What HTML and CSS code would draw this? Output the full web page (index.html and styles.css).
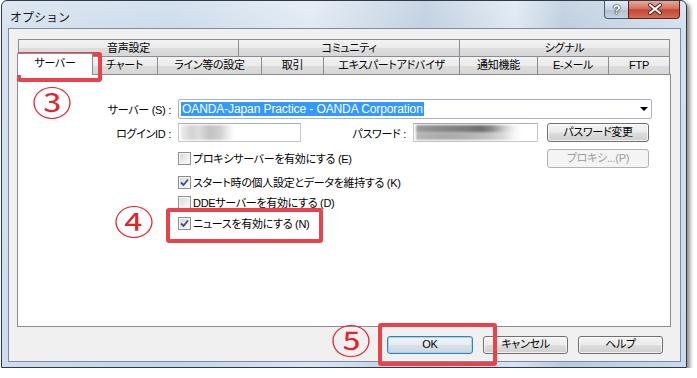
FILE: index.html
```html
<!DOCTYPE html>
<html lang="ja">
  <head>
    <meta charset="UTF-8" />
    <title>オプション</title>
    <link rel="stylesheet" href="styles.css">
  </head>
  <body>
    <div class="window">
      <div class="titlebar">
        <span class="title">オプション</span>
        <div class="caption">
          <span class="cap-help">?</span>
          <span class="cap-close">
            <svg width="52" height="18" viewBox="0 0 52 18">
              <path d="M21 5 L31 13 M31 5 L21 13" stroke="#5a1e16" stroke-width="4" stroke-linecap="round" />
              <path d="M21 5 L31 13 M31 5 L21 13" stroke="#ffffff" stroke-width="2.2" stroke-linecap="round" />
            </svg>
          </span>
        </div>
      </div>

      <div class="client">
        <div class="tab-row back">
          <div class="tab w221">音声設定</div>
          <div class="tab w222">コミュニティ</div>
          <div class="tab w211">シグナル</div>
        </div>
        <div class="tab-row front">
          <div class="tab selected">サーバー</div>
          <div class="tab w67">チャート</div>
          <div class="tab w105">ライン等の設定</div>
          <div class="tab w63">取引</div>
          <div class="tab w137">エキスパートアドバイザ</div>
          <div class="tab w79">通知機能</div>
          <div class="tab w72">E-メール</div>
          <div class="tab w62">FTP</div>
        </div>

        <div class="panel">
          <div class="row r1">
            <span class="lbl">サーバー (S) :</span>
            <div class="combo">
              <span class="sel-text">OANDA-Japan Practice - OANDA Corporation</span>
              <span class="arrow"></span>
            </div>
          </div>
          <div class="row r2">
            <span class="lbl">ログインID :</span>
            <div class="field login"><span class="blur-login"></span></div>
            <span class="lbl-pw">パスワード :</span>
            <div class="field pw"><span class="blur-pw"></span></div>
            <span class="btn side">パスワード変更</span>
          </div>
          <div class="row r3">
            <span class="lbl"></span>
            <label class="check wide"><span class="box"></span>プロキシサーバーを有効にする (E)</label>
            <span class="btn side disabled">プロキシ...(P)</span>
          </div>
          <div class="row r4">
            <span class="lbl"></span>
            <label class="check"><span class="box on"><svg width="9" height="9" viewBox="0 0 9 9"><path d="M1 4.5 L3.5 7 L8 1.5" fill="none" stroke="#33508a" stroke-width="1.8" /></svg></span>スタート時の個人設定とデータを維持する (K)</label>
          </div>
          <div class="row r5">
            <span class="lbl"></span>
            <label class="check"><span class="box"></span>DDEサーバーを有効にする (D)</label>
          </div>
          <div class="row r6">
            <span class="lbl"></span>
            <label class="check"><span class="box on"><svg width="9" height="9" viewBox="0 0 9 9"><path d="M1 4.5 L3.5 7 L8 1.5" fill="none" stroke="#33508a" stroke-width="1.8" /></svg></span>ニュースを有効にする (N)</label>
          </div>
        </div>

        <div class="buttons">
          <span class="btn default w86">OK</span>
          <span class="btn w85">キャンセル</span>
          <span class="btn w85">ヘルプ</span>
        </div>
      </div>

      <span class="num n3">③</span>
      <span class="num n4">④</span>
      <span class="num n5">⑤</span>
      <span class="mark m-tab"></span>
      <span class="mark m-news"></span>
      <span class="mark m-ok"></span>
    </div>
  </body>
</html>
```

FILE: styles.css
```css
* {
  box-sizing: border-box;
}
body {
  margin: 0;
  background: #fff;
  font-family: "Liberation Sans", "Noto Sans CJK JP", sans-serif;
  font-size: 11px;
  letter-spacing: -0.3px;
  color: #000;
  font-feature-settings: "palt";
}
.window {
  position: relative;
  width: 686px;
  height: 368px;
  margin-left: 1px;
  border: 1px solid #303a46;
  border-radius: 6px 6px 0 0;
  padding: 0 5px 5px 6px;
  display: flex;
  flex-direction: column;
  background:
    linear-gradient(90deg, rgba(255, 255, 255, 0.2), rgba(255, 255, 255, 0) 25%, rgba(255, 255, 255, 0.4) 45%, rgba(150, 165, 185, 0.2) 62%, rgba(255, 255, 255, 0.35) 75%, rgba(140, 160, 180, 0.2) 82%, rgba(255, 255, 255, 0.15)),
    linear-gradient(180deg, #d6e2ef, #ccdbeb 30px, #c2d5ea);
  box-shadow: 3px 3px 4px rgba(0, 0, 0, 0.45);
}

/* title bar */
.titlebar {
  height: 27px;
  display: flex;
  justify-content: space-between;
  align-items: flex-start;
}
.title {
  padding: 7px 0 0 2px;
  line-height: 17px;
  font-family: "Noto Sans CJK JP", sans-serif;
  font-size: 12px;
  letter-spacing: 0;
  font-feature-settings: normal;
  color: #1a1a1a;
}
.caption {
  display: flex;
  margin-right: 1px;
}
.cap-help {
  width: 25px;
  height: 18px;
  border: 1px solid #4c5a6c;
  border-top: none;
  border-radius: 0 0 0 4px;
  background: linear-gradient(180deg, #e4ecf4, #c3d2e2 50%, #aebfd2 52%, #c7d6e6);
  color: #fff;
  font-weight: bold;
  font-size: 13px;
  line-height: 17px;
  text-align: center;
  text-shadow: 0 0 1px #2a3440, 0 0 1px #2a3440, 0 0 2px #2a3440;
}
.cap-close {
  width: 52px;
  height: 18px;
  margin-left: -1px;
  border: 1px solid #5c2017;
  border-top: none;
  border-radius: 0 0 4px 0;
  background: linear-gradient(180deg, #e6a89a, #d3705f 45%, #c44632 52%, #d36d5a);
}
.cap-close svg {
  display: block;
  margin-top: -1px;
}

/* client */
.client {
  flex: 1;
  border: 1px solid #7d8ca0;
  background: #f0f0f0;
  padding: 10px 9px 0 8px;
  display: flex;
  flex-direction: column;
}
.tab-row {
  display: flex;
  margin-left: 1px;
  height: 18px;
}
.tab-row.back {
  height: 17px;
}
.tab-row.front {
  align-items: flex-end;
}
.tab {
  height: 100%;
  border: 1px solid #898c95;
  border-bottom: none;
  background: linear-gradient(180deg, #f3f3f3, #ebebeb 50%, #dddddd 52%, #d6d6d6);
  text-align: center;
  line-height: 16px;
  white-space: nowrap;
}
.tab + .tab {
  margin-left: -1px;
}
.tab.selected {
  width: 76px;
  height: 22px;
  margin-left: -1px;
  margin-right: -1px;
  margin-bottom: -1px;
  background: #fff;
  z-index: 1;
  line-height: 19px;
}
.w221 { width: 221px; }
.w222 { width: 222px; }
.w211 { width: 211px; }
.w67 { width: 67px; }
.w105 { width: 105px; }
.w63 { width: 63px; }
.w137 { width: 137px; }
.w79 { width: 79px; }
.w72 { width: 72px; }
.w62 { width: 62px; }
.w86 { width: 86px; }
.w85 { width: 85px; }

.panel {
  height: 253px;
  border: 1px solid #898c95;
  background: #fff;
  padding-top: 24px;
}

/* form rows */
.row {
  display: flex;
  align-items: center;
  height: 20px;
}
.r2 {
  height: 19px;
  margin-top: 4px;
}
.r3 {
  margin-top: 6px;
}
.r4 {
  margin-top: 4px;
}
.r6 {
  margin-top: 1px;
}
.lbl {
  width: 153px;
  margin-right: 7px;
  text-align: right;
  white-space: nowrap;
}
.combo {
  width: 474px;
  height: 20px;
  border: 1px solid #a9b2be;
  border-radius: 2px;
  display: flex;
  align-items: center;
  justify-content: space-between;
  padding: 0 3px 0 2px;
}
.sel-text {
  background: #3399ff;
  color: #fff;
  font-size: 12px;
  letter-spacing: -0.1px;
  line-height: 14px;
  padding: 0 1px;
}
.arrow {
  width: 0;
  height: 0;
  border-left: 4px solid transparent;
  border-right: 4px solid transparent;
  border-top: 4px solid #000;
}
.field {
  height: 19px;
  border: 1px solid #c5c8ce;
  border-top-color: #abadb3;
  background: #fff;
  display: flex;
  align-items: center;
  padding-left: 2px;
}
.login {
  width: 123px;
}
.pw {
  width: 125px;
}
.blur-login {
  width: 52px;
  height: 15px;
  background:
    linear-gradient(90deg, #ececec, #d2d2d2 20%, #dcdcdc 35%, #c2c2c2 55%, #cfcfcf 75%, #ececec 90%, #fafafa);
  filter: blur(1px);
}
.blur-pw {
  width: 106px;
  height: 15px;
  background:
    linear-gradient(90deg, #9c9c9c, #8a8a8a 20%, #7d7d7d 45%, #6f6f6f 62%, #8c8c8c 72%, #c7c7c7 82%, #f2f2f2 92%, #fff) top / 100% 50% no-repeat,
    linear-gradient(90deg, #b6b6b6, #aaaaaa 25%, #b3b3b3 50%, #c2c2c2 68%, #d8d8d8 82%, #f5f5f5 92%, #fff) bottom / 100% 50% no-repeat;
  filter: blur(0.8px);
}
.lbl-pw {
  width: 105px;
  margin-right: 7px;
  text-align: right;
}

/* buttons */
.btn {
  height: 19px;
  border: 1px solid #707070;
  border-radius: 3px;
  background: linear-gradient(180deg, #f4f4f4, #ebebeb 48%, #dddddd 52%, #cfcfcf);
  box-shadow: inset 0 0 0 1px rgba(255, 255, 255, 0.7);
  text-align: center;
  line-height: 16px;
  white-space: nowrap;
}
.btn.side {
  width: 102px;
  margin-left: 9px;
}
.r3 .btn.side {
  margin-left: 0;
}
.btn.disabled {
  border-color: #adb2b5;
  background: #f4f4f4;
  box-shadow: none;
  color: #9d9d9d;
}
.btn.default {
  border-color: #3c7fb1;
  box-shadow: inset 0 0 0 1px #9ad8f5;
  background: linear-gradient(180deg, #f0f4f8, #e6ecf2 48%, #d8e0e8 52%, #cdd6df);
}
.buttons {
  display: flex;
  justify-content: flex-end;
  gap: 10px;
  margin-top: 9px;
  padding-right: 8px;
}
.buttons .btn {
  height: 18px;
  line-height: 15px;
}

/* checkboxes */
.check {
  display: flex;
  align-items: center;
  white-space: nowrap;
}
.check.wide {
  width: 369px;
}
.box {
  width: 13px;
  height: 13px;
  margin-right: 2px;
  border: 1px solid #8f8f8f;
  background: linear-gradient(135deg, #d4d4d4, #f2f2f2 70%, #fbfbfb);
  box-shadow: inset 0 0 0 1px #f6f6f6;
  display: flex;
  align-items: center;
  justify-content: center;
}

/* annotations */
.num {
  position: absolute;
  font-family: "Noto Sans CJK JP", sans-serif;
  font-size: 40px;
  line-height: 40px;
  letter-spacing: 0;
  color: #e3262d;
  transform: scale(1, 0.85);
}
.n3 { left: 30px; top: 81px; }
.n4 { left: 112px; top: 200px; }
.n5 { left: 329px; top: 319px; }
.mark {
  position: absolute;
  border: 4px solid #e8434b;
  border-radius: 3px;
}
.m-tab { left: 15px; top: 51px; width: 85px; height: 30px; }
.m-news { left: 164px; top: 207px; width: 157px; height: 35px; }
.m-ok { left: 376px; top: 322px; width: 119px; height: 43px; }
```
